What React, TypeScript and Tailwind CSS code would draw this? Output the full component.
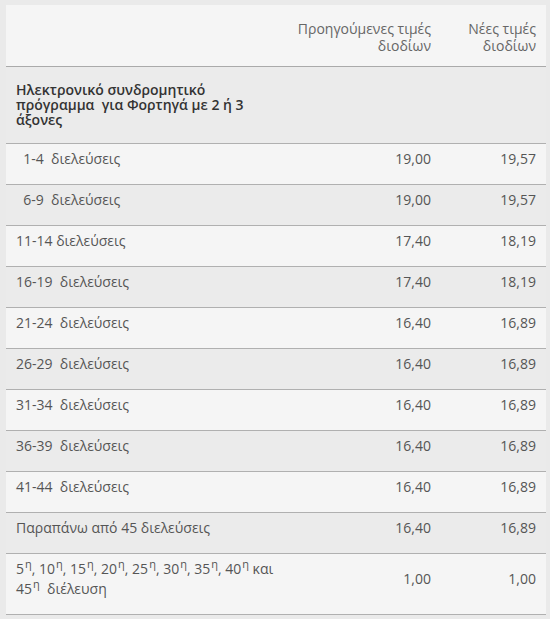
import React from 'react';

type Row = { label: React.ReactNode; prev: string; next: string };

const Sup = ({ children }: { children: React.ReactNode }) => (
  <sup className="text-[11px] top-[-0.5em] ml-[1px]">{children}</sup>
);

const rows: Row[] = [
  { label: <>&nbsp; 1-4&nbsp; διελεύσεις</>, prev: '19,00', next: '19,57' },
  { label: <>&nbsp; 6-9&nbsp; διελεύσεις</>, prev: '19,00', next: '19,57' },
  { label: '11-14 διελεύσεις', prev: '17,40', next: '18,19' },
  { label: <>16-19&nbsp; διελεύσεις</>, prev: '17,40', next: '18,19' },
  { label: <>21-24&nbsp; διελεύσεις</>, prev: '16,40', next: '16,89' },
  { label: <>26-29&nbsp; διελεύσεις</>, prev: '16,40', next: '16,89' },
  { label: <>31-34&nbsp; διελεύσεις</>, prev: '16,40', next: '16,89' },
  { label: <>36-39&nbsp; διελεύσεις</>, prev: '16,40', next: '16,89' },
  { label: <>41-44&nbsp; διελεύσεις</>, prev: '16,40', next: '16,89' },
  { label: 'Παραπάνω από 45 διελεύσεις', prev: '16,40', next: '16,89' },
  {
    label: (
      <>
        5<Sup>η</Sup>, 10<Sup>η</Sup>, 15<Sup>η</Sup>, 20<Sup>η</Sup>, 25<Sup>η</Sup>, 30<Sup>η</Sup>, 35<Sup>η</Sup>, 40<Sup>η</Sup> και 45<Sup>η</Sup>&nbsp; διέλευση
      </>
    ),
    prev: '1,00',
    next: '1,00',
  },
];

const App: React.FC = () => {
  return (
    <div className="min-h-screen bg-[#eaeaea] pt-[5px] pl-[6px] font-['Open_Sans',sans-serif] text-[14px] text-[#555]">
      <table className="w-[540px] table-fixed border-collapse">
        <colgroup>
          <col className="w-[275px]" />
          <col className="w-[160px]" />
          <col className="w-[105px]" />
        </colgroup>
        <thead>
          <tr className="bg-[#f5f5f5] border-b border-[#aaa]">
            <th className="h-[61px]"></th>
            <th className="pt-[15px] pb-[11px] px-[10px] text-right font-normal leading-[17px] text-[#666] align-top">
              Προηγούμενες τιμές διοδίων
            </th>
            <th className="pt-[15px] pb-[11px] px-[10px] text-right font-normal leading-[17px] text-[#666] align-top">
              Νέες τιμές διοδίων
            </th>
          </tr>
        </thead>
        <tbody>
          <tr className="bg-[#ebebeb] border-b border-[#b0b0b0]">
            <td className="pt-[15px] pb-[16px] pl-[10px] pr-[20px] font-semibold leading-[15px] text-[#333] align-top">
              Ηλεκτρονικό συνδρομητικό πρόγραμμα&nbsp; για Φορτηγά με 2 ή 3 άξονες
            </td>
            <td></td>
            <td></td>
          </tr>
          {rows.map((r, i) => (
            <tr
              key={i}
              className={`border-b border-[#b0b0b0] ${i % 2 === 0 ? 'bg-[#f5f5f5]' : 'bg-[#ebebeb]'}`}
            >
              <td className="pt-[5px] pb-[15px] pl-[10px] pr-[2px] leading-[20px] align-top">{r.label}</td>
              <td className="pt-[5px] pb-[15px] px-[10px] text-right leading-[20px] align-middle">{r.prev}</td>
              <td className="pt-[5px] pb-[15px] px-[10px] text-right leading-[20px] align-middle">{r.next}</td>
            </tr>
          ))}
        </tbody>
      </table>
    </div>
  );
};

export default App;
